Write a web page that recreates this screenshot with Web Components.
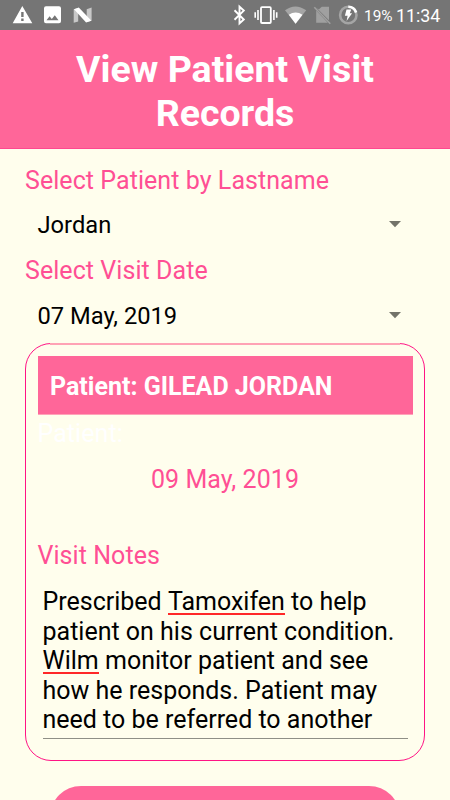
<!DOCTYPE html>
<html lang="en">
<head>
<meta charset="utf-8">
<title>View Patient Visit Records</title>
<style>
html, body { margin: 0; height: 800px; overflow: hidden; background: #fffeed; }
body { font-family: Roboto, "Liberation Sans", sans-serif; font-size: 25px; line-height: 30px; color: #000; --pink: #ff6699; --label: #ff4f94; }
</style>
</head>
<body>
<visit-screen></visit-screen>
<script>
const define = (name, html) => customElements.define(name, class extends HTMLElement {
  constructor() {
    super();
    const t = document.createElement('template');
    t.innerHTML = html;
    this.attachShadow({ mode: 'open' }).appendChild(t.content.cloneNode(true));
  }
});

define('status-bar', `<style>
:host { display: flex; align-items: center; height: 30px; background: #757575; color: #fff; padding: 0 10px 0 12px; box-sizing: border-box; line-height: 30px; }
svg { display: block; flex: none; }
.gap { flex: 1; }
.pct { font-size: 15.4px; margin-left: 6px; width: 28px; white-space: nowrap; padding-top: 2px; }
.time { font-size: 17.8px; margin-left: 4px; width: 44px; white-space: nowrap; padding-top: 2px; }
</style>
<svg width="84" height="30" viewBox="12 0 84 30">
  <path fill="#fff" fill-rule="evenodd" d="M22.3 6L32.3 23.3H12.7ZM21.2 12v5h2.4v-5ZM21.2 18.5v2.4h2.4v-2.4Z"/>
  <path fill="#fff" fill-rule="evenodd" d="M46 6.3h13a2 2 0 0 1 2 2v13a2 2 0 0 1-2 2H46a2 2 0 0 1-2-2v-13a2 2 0 0 1 2-2ZM46.5 20.3h12l-3.7-5-3 3.7-2.2-2.7Z"/>
  <path fill="#c8c8c8" d="M73.7 9.3l4.5-1.3v13.5l-4.5 1.2ZM86.7 9.3l4.9-1.7v13.2l-4.9 1.3Z"/>
  <path fill="#fff" d="M74 9.2l4.8-1.8L91.4 20.8l-5.3 1.8Z"/>
</svg>
<span class="gap"></span>
<svg width="126" height="30" viewBox="232 0 126 30">
  <path fill="none" stroke="#fff" stroke-width="1.9" d="M234.5 10.3l9.3 9.2-4.3 3.9V6.7l4.3 3.9-9.3 9.2"/>
  <rect x="261" y="7.2" width="9.8" height="15.8" rx="1" fill="none" stroke="#fff" stroke-width="1.8"/>
  <path stroke="#fff" stroke-width="1.6" d="M258 10v10M255.2 12.3v5.4M273.9 10v10M276.7 12.3v5.4"/>
  <path fill="#a5a5a5" d="M285 10.3Q295.3 2.5 306.2 10.3L295.6 23.7Z"/>
  <path fill="#fff" d="M288.8 14.8Q295.6 10.2 302.5 14.8L295.6 23.7Z"/>
  <path fill="#a0a0a0" d="M319 9.3l2.8-2.6h7.2v13.5l-12-12ZM316.2 10.5L327.8 22.7H316.2Z"/>
  <path stroke="#a0a0a0" stroke-width="1.5" d="M314.3 7.2l16 16.5"/>
  <circle cx="348.3" cy="15" r="8.2" fill="none" stroke="#a5a5a5" stroke-width="2.6"/>
  <path fill="none" stroke="#fff" stroke-width="2.6" d="M348.3 6.8a8.2 8.2 0 0 1 7.8 5.7"/>
  <path fill="#fff" d="M346.5 9.5h4.7l-1.4 3.8h2.3l-5.5 7.7 1-5.3h-2.7Z"/>
</svg>
<span class="pct">19%</span><span class="time">11:34</span>`);

define('title-bar', `<style>
:host { display: block; box-sizing: border-box; height: 119px; padding: 17px 60px 0; background: var(--pink); border-bottom: 1px solid #ff4890; color: #fff; font-weight: 700; font-size: 37.5px; line-height: 44px; text-align: center; }
</style><slot></slot>`);

define('field-label', `<style>
:host { display: block; color: var(--label); white-space: nowrap; letter-spacing: .06px; }
</style><slot></slot>`);

define('drop-select', `<style>
:host { display: flex; align-items: center; justify-content: space-between; padding: 0 24px 0 12.5px; height: 30px; font-size: 23.7px; }
svg { display: block; margin-bottom: 2px; }
</style><span><slot></slot></span><svg width="12" height="8" viewBox="0 0 12 8"><path fill="#737369" d="M0 1h12L6 7.2Z"/></svg>`);

define('record-card', `<style>
:host { display: flex; flex-direction: column; box-sizing: border-box; height: 418px; border: 1px solid #ff1485; border-radius: 26px; padding: 12px 11.5px 0; position: relative; }
:host::before { content: ""; position: absolute; top: -1px; left: 24px; right: 24px; height: 2px; background: #ffa3b5; }
</style><slot></slot>`);

define('card-heading', `<style>
:host { display: flex; align-items: center; box-sizing: border-box; height: 59px; padding: 2px 12.5px 0; background: linear-gradient(var(--pink) 58px, #ffa3b8 58px); color: #fff; font-weight: 700; white-space: nowrap; }
</style><slot></slot>`);

define('note-editor', `<style>
:host { display: block; box-sizing: border-box; margin: 16px 5px 0; height: 152px; border-bottom: 1px solid #8f8f86; line-height: 29.5px; white-space: nowrap; }
</style><slot></slot>`);

define('spell-mark', `<style>
:host { display: inline-block; height: 26px; border-bottom: 2px solid #ff2828; vertical-align: top; }
</style><slot></slot>`);

define('action-button', `<style>
:host { display: block; width: 350px; height: 62px; margin: 25px auto 0; border-radius: 31px; background: var(--pink); }
</style>`);

define('visit-screen', `<style>
:host { display: block; width: 450px; height: 800px; overflow: hidden; }
main { padding: 16px 25px 0; }
.l1 { padding-top: 1px; }
.l2 { margin: 16px 0 15px; }
.s1 { margin-top: 14px; }
.card { margin-top: 12px; }
.ghost { color: #fff; margin-top: 4px; }
.date { text-align: center; margin-top: 16px; }
.notes { margin-top: 46px; }
</style>
<status-bar></status-bar>
<title-bar>View Patient Visit<br>Records</title-bar>
<main>
  <field-label class="l1">Select Patient by Lastname</field-label>
  <drop-select class="s1">Jordan</drop-select>
  <field-label class="l2">Select Visit Date</field-label>
  <drop-select>07 May, 2019</drop-select>
  <record-card class="card">
    <card-heading>Patient: GILEAD JORDAN</card-heading>
    <field-label class="ghost">Patient:</field-label>
    <field-label class="date">09 May, 2019</field-label>
    <field-label class="notes">Visit Notes</field-label>
    <note-editor>Prescribed <spell-mark>Tamoxifen</spell-mark> to help<br>patient on his current condition.<br><spell-mark>Wilm</spell-mark> monitor patient and see<br>how he responds. Patient may<br>need to be referred to another</note-editor>
  </record-card>
  <action-button></action-button>
</main>`);
</script>
</body>
</html>
